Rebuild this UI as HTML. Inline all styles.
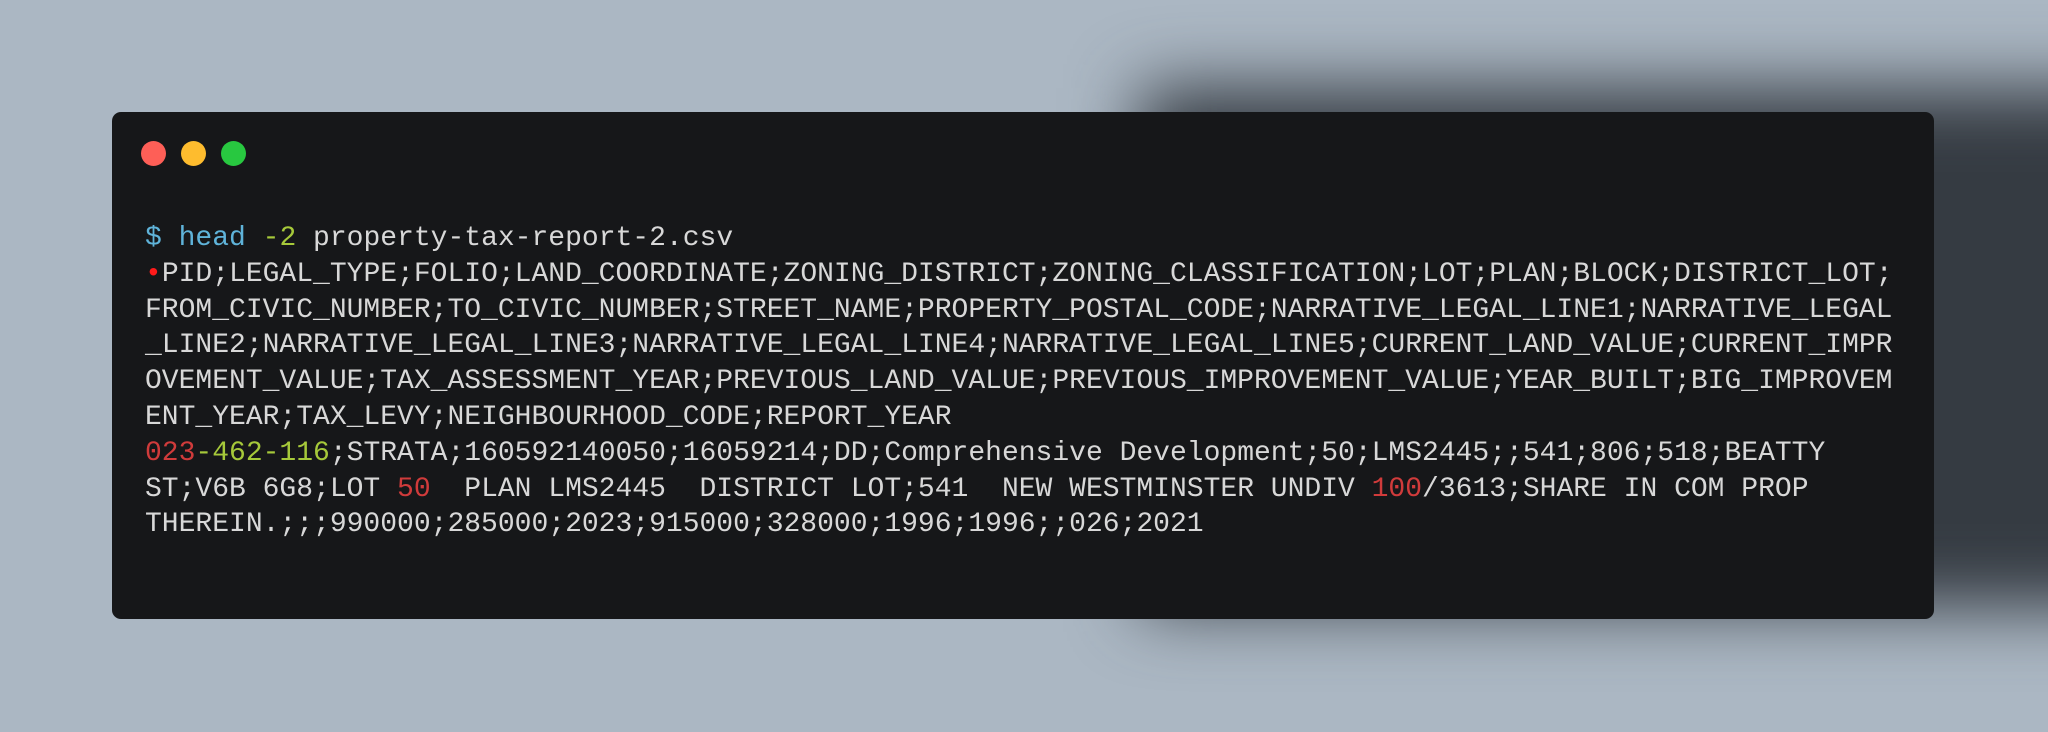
<!DOCTYPE html>
<html><head><meta charset="utf-8"><style>
html,body{margin:0;padding:0;width:2048px;height:732px;overflow:hidden;background:#abb7c3;}
.sh{position:absolute;left:1140px;top:88px;width:1100px;height:520px;background:rgba(40,45,52,.9);filter:blur(35px);}
.win{position:absolute;left:112px;top:112px;width:1822px;height:507px;background:#161719;border-radius:9px;}
.d{position:absolute;top:141px;width:25px;height:25px;border-radius:50%;}
pre{position:absolute;left:145px;top:221px;margin:0;font-family:"Liberation Mono",monospace;font-size:28px;line-height:35.8px;color:#d8d8d8;}
.b{color:#5fb3d9}.g{color:#a6c93a}.r{color:#d03b3b}.dot{color:#ff1a1a}
</style></head><body>
<div class="sh"></div>
<div class="win"></div>
<div class="d" style="left:141px;background:#fe5f57"></div>
<div class="d" style="left:181px;background:#febc2e"></div>
<div class="d" style="left:221px;background:#28c840"></div>
<pre><span class="b">$ head</span> <span class="g">-2</span> property-tax-report-2.csv
<span class="dot">•</span>PID;LEGAL_TYPE;FOLIO;LAND_COORDINATE;ZONING_DISTRICT;ZONING_CLASSIFICATION;LOT;PLAN;BLOCK;DISTRICT_LOT;
FROM_CIVIC_NUMBER;TO_CIVIC_NUMBER;STREET_NAME;PROPERTY_POSTAL_CODE;NARRATIVE_LEGAL_LINE1;NARRATIVE_LEGAL
_LINE2;NARRATIVE_LEGAL_LINE3;NARRATIVE_LEGAL_LINE4;NARRATIVE_LEGAL_LINE5;CURRENT_LAND_VALUE;CURRENT_IMPR
OVEMENT_VALUE;TAX_ASSESSMENT_YEAR;PREVIOUS_LAND_VALUE;PREVIOUS_IMPROVEMENT_VALUE;YEAR_BUILT;BIG_IMPROVEM
ENT_YEAR;TAX_LEVY;NEIGHBOURHOOD_CODE;REPORT_YEAR
<span class="r">023</span><span class="g">-462-116</span>;STRATA;160592140050;16059214;DD;Comprehensive Development;50;LMS2445;;541;806;518;BEATTY
ST;V6B 6G8;LOT <span class="r">50</span>  PLAN LMS2445  DISTRICT LOT;541  NEW WESTMINSTER UNDIV <span class="r">100</span>/3613;SHARE IN COM PROP
THEREIN.;;;990000;285000;2023;915000;328000;1996;1996;;026;2021</pre>
</body></html>
